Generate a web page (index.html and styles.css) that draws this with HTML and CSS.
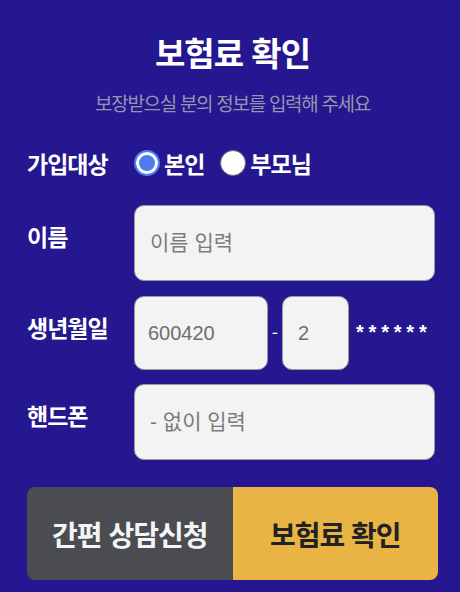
FILE: index.html
```html
<!DOCTYPE html>
<html lang="ko">
<head>
  <meta charset="UTF-8" />
  <meta name="viewport" content="width=device-width, initial-scale=1.0"/>
  <title>보험료 확인</title>
  <link rel="stylesheet" href="styles.css">
</head>
<body>

  <main class="calc">
    <h1>보험료 확인</h1>
    <p class="sub">보장받으실 분의 정보를 입력해 주세요</p>

    <div class="row row-radio">
      <span class="label">가입대상</span>
      <label class="radio"><input type="radio" name="target" checked>본인</label>
      <label class="radio"><input type="radio" name="target">부모님</label>
    </div>

    <div class="row">
      <label class="label" for="name">이름</label>
      <input class="field" id="name" type="text" placeholder="이름 입력">
    </div>

    <div class="row row-birth">
      <label class="label" for="birth">생년월일</label>
      <input class="field field-birth" id="birth" type="text" value="600420">
      <span class="dash">-</span>
      <input class="field field-gender" type="text" value="2">
      <span class="mask">******</span>
    </div>

    <div class="row">
      <label class="label" for="phone">핸드폰</label>
      <input class="field" id="phone" type="tel" placeholder="- 없이 입력">
    </div>

    <div class="actions">
      <button class="btn btn-consult">간편 상담신청</button>
      <button class="btn btn-check">보험료 확인</button>
    </div>
  </main>

</body>
</html>
```

FILE: styles.css
```css
body {
  font-family: "Noto Sans CJK KR", "Noto Sans", sans-serif;
  background-color: #24178f;
  color: #ffffff;
  margin: 0;
  padding: 0;
}

.calc {
  padding: 27px 22px 0 27px;
}

h1 {
  margin: 0;
  text-align: center;
  font-size: 33px;
  font-weight: 700;
  letter-spacing: -1px;
  line-height: 50px;
}

.sub {
  margin: 14px 0 33px;
  text-align: center;
  font-size: 19px;
  letter-spacing: -1.3px;
  color: #9795ad;
  line-height: 24px;
}

.row {
  display: flex;
  align-items: flex-start;
  margin-bottom: 15px;
}

.row-birth {
  margin-bottom: 14px;
}

.label {
  width: 107px;
  flex-shrink: 0;
  margin-top: 16px;
  font-size: 23px;
  font-weight: 700;
  letter-spacing: -1px;
  line-height: 30px;
}

.row-radio {
  align-items: center;
  height: 30px;
  margin-bottom: 27px;
}

.row-radio .label {
  margin-top: 0;
}

.radio {
  display: flex;
  align-items: center;
  margin-right: 16px;
  font-size: 23px;
  font-weight: 700;
  letter-spacing: -1px;
  line-height: 30px;
}

.radio input {
  appearance: none;
  -webkit-appearance: none;
  width: 26px;
  height: 26px;
  margin: 0 4px 0 0;
  border-radius: 50%;
  border: 1.5px solid #6b6b6b;
  background-color: #ffffff;
}

.radio input:checked {
  border: 2px solid #4e7cf2;
  background-color: #4e7cf2;
  box-shadow: inset 0 0 0 3px #ffffff;
}

.field {
  box-sizing: border-box;
  width: 301px;
  height: 76px;
  padding: 0 15px;
  font-family: "Liberation Sans", "Noto Sans CJK KR", sans-serif;
  font-size: 20px;
  color: #6f6f6f;
  background-color: #f3f3f3;
  border: 1px solid #9a9a9a;
  border-radius: 10px;
  outline: none;
}

.field::placeholder {
  font-size: 21px;
  color: #7b7b7b;
}

.field-birth {
  width: 134px;
  height: 74px;
  padding-left: 13px;
}

.field-gender {
  width: 67px;
  height: 74px;
}

.dash {
  width: 14px;
  text-align: center;
  line-height: 72px;
  font-size: 18px;
}

.mask {
  margin-left: 7px;
  line-height: 72px;
  font-family: "Liberation Sans", sans-serif;
  font-size: 20px;
  font-weight: 700;
  letter-spacing: 4.8px;
}

.actions {
  display: flex;
  margin-top: 27px;
  width: 411px;
  border-radius: 8px;
  overflow: hidden;
}

.btn {
  flex: 1;
  height: 93px;
  border: none;
  font-family: "Noto Sans CJK KR", sans-serif;
  font-size: 28px;
  font-weight: 700;
  letter-spacing: -1px;
  cursor: pointer;
}

.btn-consult {
  background-color: #4b4c52;
  color: #f4f4f4;
}

.btn-check {
  background-color: #eab444;
  color: #222222;
}
```
